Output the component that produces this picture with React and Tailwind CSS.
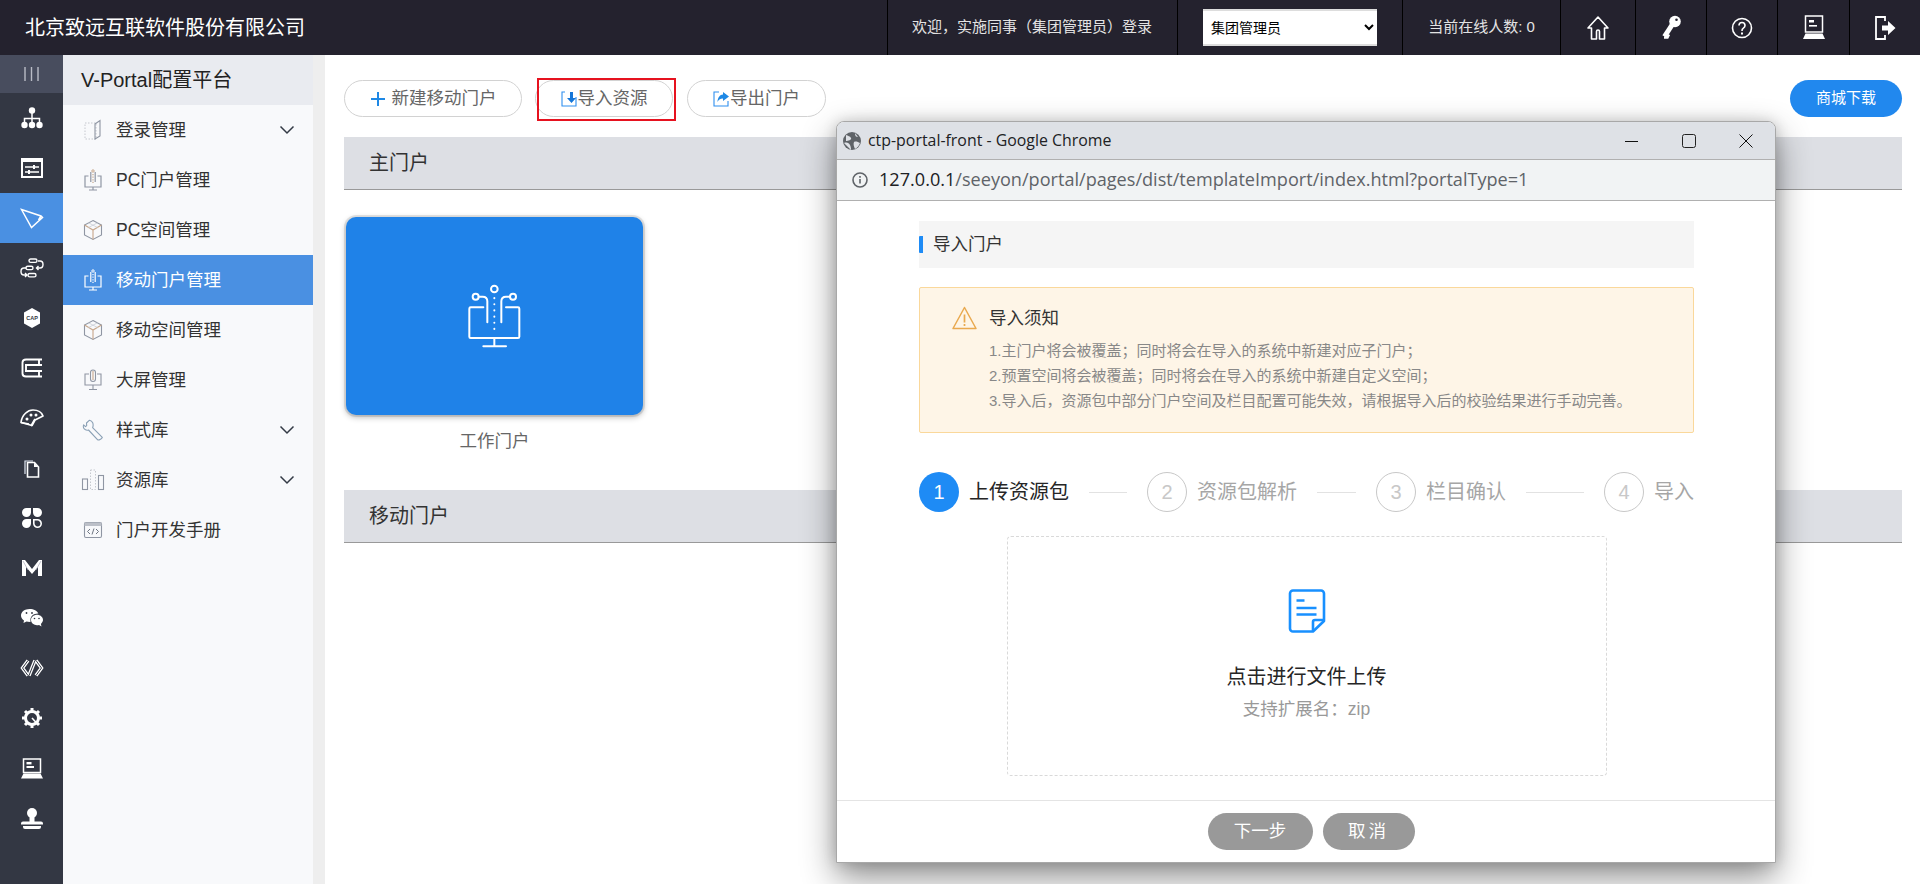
import React from "react";

const S = ({ w = 24, h = 24, vb, children, className = "" }) => (
  <svg width={w} height={h} viewBox={vb || `0 0 ${w} ${h}`} fill="none" className={`shrink-0 ${className}`}>{children}</svg>
);

/* ---------- rail icons ---------- */
const RailBars = () => (
  <S w={18} h={16}><path d="M2 1v14M8.5 1v14M15 1v14" stroke="#b9bcc6" strokeWidth="1.4" /></S>
);
const Org = () => (
  <S w={22} h={22} vb="0 0 22 22">
    <circle cx="11" cy="3.5" r="3.2" fill="#fff" />
    <path d="M11 6v9M3.5 15v-3.5h15V15" stroke="#fff" strokeWidth="1.5" />
    <circle cx="3.5" cy="18" r="3.2" fill="#fff" /><circle cx="11" cy="18" r="3.2" fill="#fff" /><circle cx="18.5" cy="18" r="3.2" fill="#fff" />
  </S>
);
const Sliders = () => (
  <S w={22} h={20}>
    <rect x="1" y="2" width="20" height="17" stroke="#fff" strokeWidth="2" />
    <rect x="0" y="0" width="22" height="4" fill="#fff" />
    <path d="M4 9h14M4 14h14" stroke="#fff" strokeWidth="1.4" />
    <rect x="12" y="7" width="2" height="4" fill="#fff" /><rect x="7" y="12" width="2" height="4" fill="#fff" />
  </S>
);
const Plane = () => (
  <S w={24} h={21}>
    <path d="M1.5 1.5 21 8l1.5 1.5L11.5 19.5Z M21 8l-2.5 4" stroke="#fff" strokeWidth="1.5" strokeLinejoin="miter" />
  </S>
);
const Flow = () => (
  <S w={24} h={20}>
    <rect x="9" y="1" width="8" height="3.4" rx="1.7" stroke="#fff" strokeWidth="1.4" />
    <rect x="6" y="8.2" width="7" height="3.4" rx="1.7" stroke="#fff" strokeWidth="1.4" />
    <rect x="8" y="15.5" width="8" height="3.4" rx="1.7" stroke="#fff" strokeWidth="1.4" />
    <path d="M18 3h2q3 0 3 3.5t-3 3.5h-3M18.5 8l-2 2 2 2M6 10H4Q1 10 1 13.5T4 17h3M5 15l2 2-2 2" stroke="#fff" strokeWidth="1.4" />
  </S>
);
const Cap = () => (
  <S w={18} h={20}>
    <path d="M9 0 17 4.5v11L9 20 1 15.5v-11Z" fill="#fff" />
    <text x="9" y="11.8" textAnchor="middle" fontSize="5.5" fontWeight="700" fill="#333743" fontFamily="Liberation Sans">CAP</text>
  </S>
);
const Stack = () => (
  <S w={22} h={20}>
    <path d="M21 1.5H5Q1.5 1.5 1.5 4.5v11q0 3 3.5 3H21M21 7H4M21 13H4M18 1.5V7M5 7v6M18 13v5.5" stroke="#fff" strokeWidth="1.9" />
  </S>
);
const Fan = () => (
  <S w={24} h={18}>
    <path d="M1 13.5C2 5.5 8 1 13 1c4.5 0 8.5 2 10 6l-8 4-3 5.5Z" stroke="#fff" strokeWidth="1.7" strokeLinejoin="round" />
    <path d="M1 13.5 9 15" stroke="#fff" strokeWidth="1.7" />
    <circle cx="7" cy="10" r="1.5" fill="#fff" /><circle cx="11" cy="6" r="1.5" fill="#fff" /><circle cx="16" cy="6" r="1.5" fill="#fff" />
    <path d="M11 17l4-7" stroke="#fff" strokeWidth="1.7" />
  </S>
);
const Doc = () => (
  <S w={17} h={19}>
    <path d="M2 15V2h8" stroke="#dfe6f2" strokeWidth="1.2" />
    <path d="M4.5 3.5h7l4 4.5v10h-11Z" fill="#333743" stroke="#fff" strokeWidth="1.6" />
    <path d="M11 3.5V8h4.5Z" fill="#fff" />
  </S>
);
const Clover = () => (
  <S w={20} h={20}>
    <path d="M4.5 0H9v4.5A4.5 4.5 0 1 1 4.5 0ZM11 0h4.5A4.5 4.5 0 1 1 11 4.5ZM9 11v4.5A4.5 4.5 0 1 1 4.5 11Z" fill="#fff" />
    <path d="M11.8 11.8h3.7a3.7 3.7 0 1 1-3.7 3.7Z" stroke="#fff" strokeWidth="1.6" />
  </S>
);
const MLogo = () => (
  <S w={20} h={16}>
    <path d="M0 0h3l7 9 7-9h3v16h-4V7l-6 7-6-7v9H0Z" fill="#fff" />
    <path d="M1 1l5 9M19 1l-5 9" stroke="#aab" strokeWidth=".7" />
  </S>
);
const Wechat = () => (
  <S w={22} h={18}>
    <path d="M8.5 0C3.8 0 0 2.8 0 6.5 0 8.6 1.2 10.3 3 11.5L2.5 14l3-1.5c1 .3 2 .4 3 .4.5 0 .8 0 1.2-.1-.2-.6-.3-1.2-.3-1.8 0-3.6 3.3-6.4 7.4-6.4h.6C16.4 2 12.8 0 8.5 0Z" fill="#fff" />
    <path d="M22 11c0-3-3-5.2-6-5.2S10 8 10 11s3 5.2 6 5.2c.7 0 1.4-.1 2-.3l2.5 1.6-.6-2.6C21 13.8 22 12.5 22 11Z" fill="#fff" />
    <circle cx="5.5" cy="4" r=".9" fill="#333743" /><circle cx="11" cy="4" r=".9" fill="#333743" /><circle cx="13.5" cy="9.5" r=".8" fill="#333743" /><circle cx="18" cy="9.5" r=".8" fill="#333743" />
  </S>
);
const Code = () => (
  <S w={24} h={18}>
    <g stroke="#fff" strokeWidth="3.4" strokeLinejoin="miter">
      <path d="M8 1.5 2.5 9 8 16.5M16 1.5 21.5 9 16 16.5M15 1.5 9 16.5" />
    </g>
    <g stroke="#333743" strokeWidth="1">
      <path d="M8 1.5 2.5 9 8 16.5M16 1.5 21.5 9 16 16.5M15 1.5 9 16.5" />
    </g>
  </S>
);
const Gear = () => (
  <S w={20} h={20}>
    <circle cx="10" cy="10" r="6.5" stroke="#fff" strokeWidth="3" />
    <path d="M10 0v4M10 16v4M0 10h4M16 10h4M3 3l3 3M14 14l3 3M17 3l-3 3M6 14l-3 3" stroke="#fff" strokeWidth="3" />
    <path d="M10 10l5.5 6" stroke="#fff" strokeWidth="1.6" />
  </S>
);
const Laptop = () => (
  <S w={22} h={21}>
    <rect x="2.5" y="1" width="17" height="13.5" stroke="#fff" strokeWidth="1.5" />
    <rect x="5.5" y="4" width="5" height="2.4" fill="#fff" /><rect x="5.5" y="8" width="7.5" height="2" fill="#fff" />
    <path d="M2.5 15.5h17L22 20.5H0Z" fill="#fff" />
  </S>
);
const Stamp = () => (
  <S w={22} h={21}>
    <circle cx="11" cy="5" r="5" fill="#fff" />
    <path d="M8.5 8h5v5.5h6.5q2 0 2 2v1H0v-1q0-2 2-2h6.5Z" fill="#fff" />
    <path d="M2 18h18v1q0 2-2 2H4q-2 0-2-2Z" fill="#fff" />
  </S>
);

/* ---------- nav icons ---------- */
const c1 = "#8f96a3", c2 = "#c7a78b";
const NLogin = () => (
  <S w={20} h={22}>
    <rect x="2" y="4" width="11" height="16" stroke="#c5c8ce" strokeWidth="1" strokeDasharray="1.5 1.5" />
    <path d="M12 5 17 1.5V17l-5 3Z" stroke={c1} strokeWidth="1.1" />
  </S>
);
const NScreen = ({ c = c1, a = c2 }) => (
  <S w={20} h={22}>
    <path d="M5.5 7H2v11h16V7h-3.5M10 18v3M6 21h8" stroke={c} strokeWidth="1.2" />
    <path d="M7.8 3v10M12.2 3v10" stroke={c} strokeWidth="1.2" />
    <circle cx="10" cy="2" r="1.2" stroke={a} />
    <path d="M10 5v10" stroke={a} strokeWidth="1.2" strokeDasharray="1.2 1.4" />
  </S>
);
const NCube = () => (
  <S w={20} h={22}>
    <path d="M10 1.5 18.5 6v10L10 20.5 1.5 16V6Z" stroke={c1} strokeWidth="1.1" />
    <path d="M1.5 6 10 11l8.5-5M10 11v9.5" stroke={c2} strokeWidth="1.1" />
    <path d="M5.5 3.8 14.5 8.5M14.5 3.8 5.5 8.5" stroke="#c9ced6" strokeWidth=".8" />
  </S>
);
const NBig = () => (
  <S w={20} h={22}>
    <path d="M6 5H2v11h16V5h-4M10 16v4M6 20.5h8" stroke={c1} strokeWidth="1.1" />
    <rect x="7.5" y="1" width="5" height="11.5" rx="2.5" stroke={c1} strokeWidth="1.1" />
    <path d="M10 2v9" stroke={c2} strokeWidth="1.1" />
  </S>
);
const NWrench = () => (
  <S w={22} h={22}>
    <path d="M7.5 1.2 4.5 4l.2 2.6L3.5 7.6 1.6 5.8C.6 9 2.8 12 6.5 11l9.2 9.8c1 .8 3.8-.7 4.6-2.4L10.6 8.6C12 5 10.5 1.6 7.5 1.2Z" stroke="#8aa0b5" strokeWidth="1.1" strokeLinejoin="round" />
  </S>
);
const NBars = () => (
  <S w={24} h={22}>
    <rect x="1.5" y="10" width="5" height="10.5" stroke={c1} strokeWidth="1.1" />
    <rect x="9.5" y="1" width="5" height="19.5" stroke="#c5c8ce" strokeWidth="1" strokeDasharray="1.5 1.5" />
    <rect x="17.5" y="6.5" width="5" height="14" stroke={c1} strokeWidth="1.1" />
  </S>
);
const NCode = () => (
  <S w={20} h={18}>
    <rect x="1.5" y="1.5" width="17" height="15" rx="1.5" stroke={c1} strokeWidth="1.1" />
    <rect x="1.5" y="1.5" width="17" height="3.5" fill="#bcc0c8" />
    <path d="M7 8l-2.5 2.5L7 13M13 8l2.5 2.5L13 13M11 7.5 9 13.5" stroke="#6f7682" strokeWidth="1" />
  </S>
);
const Chevron = () => (
  <S w={16} h={10}><path d="M1.5 1.5 8 8l6.5-6.5" stroke="#333a45" strokeWidth="1.5" /></S>
);

/* ---------- header icons ---------- */
const HHome = () => (
  <S w={24} h={26}>
    <path d="M12 2 2 13h3.5v11h5v-7.5a1.5 1.5 0 0 1 3 0V24h5V13H22Z" stroke="#fff" strokeWidth="1.6" strokeLinejoin="round" />
  </S>
);
const HKey = () => (
  <S w={20} h={25}>
    <circle cx="14" cy="6.5" r="5.8" fill="#fff" />
    <path d="M11 10 3.5 21.5" stroke="#fff" strokeWidth="5" />
    <path d="M3 22.5h3.5l1.5-3" stroke="#fff" strokeWidth="2.4" />
    <circle cx="15.5" cy="4.8" r="1.3" fill="#24222e" />
  </S>
);
const HHelp = () => (
  <S w={22} h={24}>
    <circle cx="11" cy="12" r="9.5" stroke="#fff" strokeWidth="1.6" />
    <path d="M8 9.5Q8 6.5 11 6.5t3 3q0 1.6-1.6 2.6T11 15" stroke="#fff" strokeWidth="1.6" />
    <rect x="10" y="16.5" width="2" height="2" fill="#fff" />
  </S>
);
const HLaptop = () => (
  <S w={22} h={25}>
    <rect x="2.5" y="1" width="17" height="16" stroke="#fff" strokeWidth="1.5" />
    <rect x="6" y="5" width="5" height="2.5" fill="#fff" /><rect x="6" y="10" width="8" height="1.6" fill="#fff" />
    <path d="M2.5 18.5h17L22 24H0Z" fill="#fff" />
  </S>
);
const HExit = () => (
  <S w={22} h={26}>
    <path d="M11 6V2H2v22h9v-4" stroke="#fff" strokeWidth="1.8" />
    <path d="M8 10.5h6V6l7.5 7-7.5 7v-4.5H8Z" fill="#fff" />
  </S>
);

/* ---------- data ---------- */
const rail = [Org, Sliders, Plane, Flow, Cap, Stack, Fan, Doc, Clover, MLogo, Wechat, Code, Gear, Laptop, Stamp];
const nav = [
  { t: "登录管理", I: NLogin, ch: true },
  { t: "PC门户管理", I: NScreen },
  { t: "PC空间管理", I: NCube },
  { t: "移动门户管理", I: NScreen, on: true },
  { t: "移动空间管理", I: NCube },
  { t: "大屏管理", I: NBig },
  { t: "样式库", I: NWrench, ch: true },
  { t: "资源库", I: NBars, ch: true },
  { t: "门户开发手册", I: NCode },
];
const headIcons = [[HHome, 75], [HKey, 71], [HHelp, 71], [HLaptop, 72], [HExit, 71]];

const Pill = ({ className, children }) => (
  <button className={`h-[37px] rounded-full border border-[#d2d2d2] bg-white flex items-center justify-center text-[17.5px] text-[#666] ${className}`}>{children}</button>
);

const Section = ({ title }) => (
  <div className="h-[53px] bg-[#dddfe4] border-b border-[#999] pl-[25px] flex items-center text-[20px] text-[#333]">{title}</div>
);

const Step = ({ n, t, on }) => (
  <div className="flex items-center">
    <div className={`w-10 h-10 rounded-full flex items-center justify-center text-[20px] ${on ? "bg-[#1e8bf5] text-white" : "border border-[#c8c8c8] text-[#c8c8c8]"}`}>{n}</div>
    <span className={`ml-[10px] text-[20px] whitespace-nowrap ${on ? "text-[#262626]" : "text-[#a6a6a6]"}`}>{t}</span>
  </div>
);
const StepLine = ({ className }) => <div className={`h-px bg-[#e2e2e2] mx-5 ${className}`} />;

/* ---------- app ---------- */
export default function App() {
  return (
    <div className="relative h-[884px] w-[1920px] overflow-hidden bg-white flex flex-col font-['Liberation_Sans','Noto_Sans_CJK_SC',sans-serif]">
      <header className="h-[55px] shrink-0 bg-[#24222e] flex text-[#e3e3e3] text-[15px]">
        <div className="flex-1 pl-[25px] flex items-center text-[20px] text-white whitespace-nowrap">北京致远互联软件股份有限公司</div>
        <div className="w-[290px] border-l border-black flex items-center pl-6 whitespace-nowrap">欢迎，实施同事（集团管理员）登录</div>
        <div className="w-[225px] border-l border-black flex items-center pl-[25px]">
          <select defaultValue="a" className="w-[174px] h-[37px] bg-white text-black text-[14px] border-y-2 border-[#ddd] pl-1 outline-none">
            <option value="a">集团管理员</option>
          </select>
        </div>
        <div className="w-[158px] border-l border-black flex items-center justify-center whitespace-nowrap">当前在线人数: 0</div>
        {headIcons.map(([I, w], i) => (
          <div key={i} style={{ width: w }} className="border-l border-black flex items-center justify-center"><I /></div>
        ))}
      </header>

      <div className="flex-1 flex min-h-0">
        <aside className="w-[63px] shrink-0 bg-[#333743] flex flex-col">
          <div className="h-[38px] bg-[#484d5e] flex items-center justify-center"><RailBars /></div>
          {rail.map((I, i) => (
            <div key={i} className={`h-[50px] flex items-center justify-center ${i === 2 ? "bg-[#4a90e2]" : ""}`}><I /></div>
          ))}
        </aside>

        <nav className="w-[250px] shrink-0 bg-[#f8f9fb]">
          <div className="h-[50px] bg-[#e9ebf0] pl-[18px] flex items-center text-[20px] text-[#222]">V-Portal配置平台</div>
          {nav.map(({ t, I, ch, on }) => (
            <div key={t} className={`h-[50px] flex items-center pl-[18px] pr-[18px] text-[17.5px] ${on ? "bg-[#4a90e2] text-white" : "text-[#333]"}`}>
              <div className="w-[24px] flex justify-center">{on ? <NScreen c="#fff" a="#fff" /> : <I />}</div>
              <span className="ml-[11px] flex-1">{t}</span>
              {ch && <Chevron />}
            </div>
          ))}
        </nav>

        <div className="w-3 shrink-0 bg-[#eeeeee]" />

        <main className="flex-1 pl-[19px] pr-[18px] pt-[25px]">
          <div className="flex items-center">
            <Pill className="w-[178px]">
              <S w={16} h={16}><path d="M8 1v14M1 8h14" stroke="#1e88e5" strokeWidth="2" /></S>
              <span className="ml-[6px]">新建移动门户</span>
            </Pill>
            <div className="relative ml-[13px]">
              <Pill className="w-[138px]">
                <S w={16} h={16}>
                  <path d="M4 1H1v14h14v-9" stroke="#2f8fef" strokeWidth="1.1" />
                  <path d="M9 1h3v6h3l-4.5 5L6 7h3Z" fill="#1576d8" />
                </S>
                <span className="ml-px">导入资源</span>
              </Pill>
              <div className="absolute left-[2px] -top-[2px] w-[139px] h-[43px] border-2 border-[#e6121f]" />
            </div>
            <Pill className="w-[139px] ml-[14px]">
              <S w={16} h={16}>
                <path d="M6 1H1v14h14v-5" stroke="#2f8fef" strokeWidth="1.1" />
                <path d="M10 1l6 4.5L10 10V7.5C7 7.5 5.5 9 4.5 11 4.5 7 7 3.5 10 3.5Z" fill="#1e88e5" />
              </S>
              <span className="ml-px">导出门户</span>
            </Pill>
            <button className="ml-auto w-[112px] h-[37px] rounded-full bg-[#2188ee] text-white text-[15px]">商城下载</button>
          </div>

          <div className="mt-5"><Section title="主门户" /></div>
          <div className="h-[300px] pt-[27px] pl-[2px]">
            <div className="w-[297px] h-[198px] rounded-[10px] bg-[#1f82e8] shadow-[0_0_0_2px_rgba(0,0,0,0.09),0_2px_6px_rgba(0,0,0,0.3)] flex items-center justify-center">
              <S w={54} h={65} vb="415 250 160 195">
                <g stroke="#fff" strokeWidth="6" strokeLinecap="round">
                  <path d="M460 320H422a4 4 0 0 0-4 4V408a4 4 0 0 0 4 4H564a4 4 0 0 0 4-4V324a4 4 0 0 0-4-4H528M493 412V436M460 437H528" />
                  <circle cx="437" cy="288" r="9" /><circle cx="549" cy="288" r="9" /><circle cx="493" cy="265" r="10" />
                  <path d="M446 288H458q14 0 14 14V365M540 288H528q-14 0-14 14V365" />
                  <path d="M493 292V386" strokeDasharray="0.5 18" />
                </g>
              </S>
            </div>
            <div className="w-[297px] mt-[13px] text-center text-[17.5px] text-[#666]">工作门户</div>
          </div>
          <Section title="移动门户" />
        </main>
      </div>

      {/* floating browser window */}
      <div className="absolute left-[836px] top-[121px] w-[940px] h-[742px] rounded-t-[8px] border border-[#a8a8a8] bg-white shadow-[0_14px_34px_rgba(0,0,0,0.45),0_0_14px_rgba(0,0,0,0.15)] flex flex-col overflow-hidden">
        <div className="h-[38px] shrink-0 bg-[#dee1e6] border-b border-[#b0b0b0] flex items-center pl-[6px]">
          <S w={18} h={18}>
            <circle cx="9" cy="9" r="9" fill="#5f6368" />
            <path d="M1 11c3-1 5 0 6 2s1 4 1 5M3 3c2 1 4 1 5 3S5 9 3 9M12 1c0 3 1 4 3 4M11 10c2-1 4 0 6 1-1 3-3 5-5 6-1-2-2-5-1-7Z" fill="#dee1e6" />
          </S>
          <span className="ml-[7px] text-[15.9px] text-[#202124] font-['Open_Sans',sans-serif]">ctp-portal-front - Google Chrome</span>
          <div className="ml-auto flex items-center">
            <S w={14} h={14}><path d="M0 7.5h13" stroke="#111" strokeWidth="1" /></S>
            <S w={14} h={14} className="ml-[43px]"><rect x=".5" y=".5" width="13" height="13" rx="2" stroke="#222" strokeWidth="1" /></S>
            <S w={14} h={14} className="ml-[43px] mr-[22px]"><path d="M.5.5l13 13M13.5.5l-13 13" stroke="#111" strokeWidth="1" /></S>
          </div>
        </div>
        <div className="h-[41px] shrink-0 bg-[#f1f3f4] border-b border-[#b0b0b0] flex items-center pl-[15px]">
          <S w={16} h={16}>
            <circle cx="8" cy="8" r="7" stroke="#5f6368" strokeWidth="1.6" />
            <path d="M8 7v4.5M8 4v1.8" stroke="#5f6368" strokeWidth="1.6" />
          </S>
          <span className="ml-[11px] text-[18.1px] text-[#5f6368] whitespace-nowrap font-['Open_Sans',sans-serif]"><span className="text-[#202124]">127.0.0.1</span>/seeyon/portal/pages/dist/templateImport/index.html?portalType=1</span>
        </div>

        <div className="flex-1 pl-[82px] pr-[81px] pt-5 flex flex-col">
          <div className="h-[47px] bg-[#f5f5f5] flex items-center text-[17.5px] text-[#333]">
            <div className="w-1 h-[17px] bg-[#1e8bf5] rounded-l-[1px]" />
            <span className="ml-[10px]">导入门户</span>
          </div>

          <div className="mt-[19px] h-[146px] rounded-[2px] border border-[#fad89b] bg-[#fef5e7] pl-[32px] pt-[17px]">
            <div className="flex items-center">
              <S w={25} h={24}>
                <path d="M12.5 1.5 1 22.5h23Z" stroke="#e9a94f" strokeWidth="1.5" strokeLinejoin="round" />
                <path d="M12.5 8.5v8M12.5 18v2" stroke="#e9a94f" strokeWidth="1.7" />
              </S>
              <span className="ml-3 text-[17.5px] text-[#333]">导入须知</span>
            </div>
            <div className="ml-[37px] mt-[7px] text-[15px] leading-[25px] text-[#888] whitespace-nowrap">
              <div>1.主门户将会被覆盖；同时将会在导入的系统中新建对应子门户；</div>
              <div>2.预置空间将会被覆盖；同时将会在导入的系统中新建自定义空间；</div>
              <div>3.导入后，资源包中部分门户空间及栏目配置可能失效，请根据导入后的校验结果进行手动完善。</div>
            </div>
          </div>

          <div className="mt-[39px] flex items-center">
            <Step n="1" t="上传资源包" on />
            <StepLine className="w-[38px]" />
            <Step n="2" t="资源包解析" />
            <StepLine className="w-[39px]" />
            <Step n="3" t="栏目确认" />
            <StepLine className="w-[58px]" />
            <Step n="4" t="导入" />
          </div>

          <div className="mx-auto mt-[24px] w-[600px] h-[240px] border border-dashed border-[#d9d9d9] rounded-[4px] flex flex-col items-center pt-[52px]">
            <S w={38} h={44}>
              <path d="M5 1.5h28a3 3 0 0 1 3 3V32L25 42.5H5a3 3 0 0 1-3-3V4.5a3 3 0 0 1 3-3Z" stroke="#1890ff" strokeWidth="2.6" strokeLinejoin="round" />
              <path d="M36 31H27a2 2 0 0 0-2 2v9" stroke="#1890ff" strokeWidth="2.6" />
              <path d="M8.5 11.5h8M8.5 19h20M8.5 25.5h20" stroke="#1890ff" strokeWidth="2.6" />
            </S>
            <div className="mt-[29px] text-[20px] text-[#262626] leading-[30px]">点击进行文件上传</div>
            <div className="mt-[4px] text-[17.5px] text-[#999] leading-[26px]">支持扩展名：zip</div>
          </div>
        </div>

        <div className="h-[62px] shrink-0 border-t border-[#e4e4e4] flex justify-center items-center gap-[10px] pl-[10px]">
          <button className="w-[105px] h-[37px] rounded-full bg-[#999] text-white text-[17.5px]">下一步</button>
          <button className="w-[92px] h-[37px] rounded-full bg-[#999] text-white text-[17.5px] tracking-[3px]">取消</button>
        </div>
      </div>
    </div>
  );
}
